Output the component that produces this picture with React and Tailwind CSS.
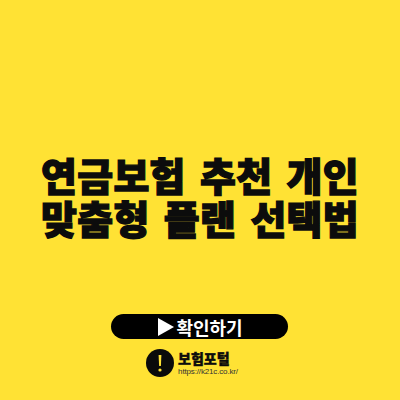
const cjk = { fontFamily: '"Noto Sans CJK KR", "Noto Sans", sans-serif' };

export default function App() {
  return (
    <div className="w-[400px] h-[400px] bg-[#ffe234] flex flex-col items-center overflow-hidden" style={cjk}>
      <div className="mt-[152px] h-[87px] flex flex-col items-center text-[#0c0c0c]">
        <div className="text-[39px] leading-[44px] font-black whitespace-nowrap tracking-[0.3px] [word-spacing:5px] [-webkit-text-stroke:1.3px_#0c0c0c]">연금보험 추천 개인</div>
        <div className="text-[39px] leading-[43px] font-black whitespace-nowrap tracking-[0.3px] [word-spacing:5px] [-webkit-text-stroke:1.3px_#0c0c0c]">맞춤형 플랜 선택법</div>
      </div>

      <button className="mt-[75px] ml-[-1px] pl-[2px] w-[177px] h-[25px] rounded-full bg-black text-white flex items-center justify-center gap-[2px] text-[18px] font-bold leading-none">
        <svg width="16" height="18" viewBox="0 0 16 18" className="shrink-0">
          <polygon points="0,0 16,9 0,18" fill="#fff" />
        </svg>
        <span>확인하기</span>
      </button>

      <div className="mt-[10px] ml-[-16px] flex items-center gap-[4px]">
        <svg width="28" height="28" viewBox="0 0 28 28" className="shrink-0">
          <circle cx="14" cy="14" r="14" fill="#0a0a0a" />
          <path d="M12.6 6h2.8l-.5 11h-1.8z" fill="#ffe234" />
          <circle cx="14" cy="21" r="1.6" fill="#ffe234" />
        </svg>
        <div className="flex flex-col">
          <span className="text-[14px] leading-[17px] font-black text-[#0c0c0c] [-webkit-text-stroke:0.4px_#0c0c0c]">보험포털</span>
          <span className="text-[8px] leading-[10px] tracking-[-0.15px] text-[#333]" style={{ fontFamily: '"Liberation Sans", sans-serif' }}>https://k21c.co.kr/</span>
        </div>
      </div>
    </div>
  );
}
